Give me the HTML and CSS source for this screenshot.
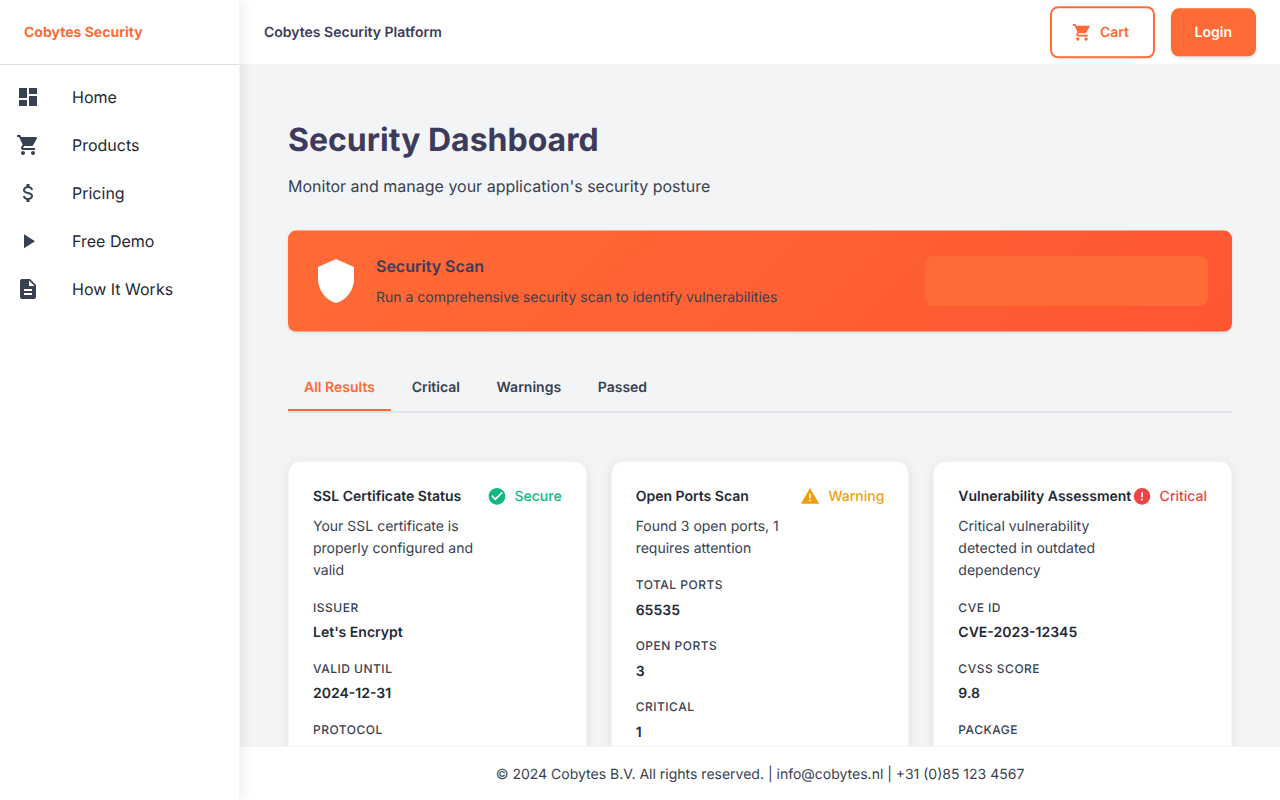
FILE: index.html
```html
<!DOCTYPE html>
<html lang="en">
<head>
<meta charset="utf-8">
<title>Cobytes Security Platform</title>
<link rel="stylesheet" href="styles.css">
</head>
<body>
<svg class="sprite" aria-hidden="true">
  <symbol id="cart" viewBox="0 0 24 24"><path d="M17 18a2 2 0 0 1 2 2 2 2 0 0 1-2 2 2 2 0 0 1-2-2c0-1.11.89-2 2-2M1 2h3.27l.94 2H20a1 1 0 0 1 1 1c0 .17-.05.34-.12.5l-3.58 6.47c-.34.61-1 1.03-1.75 1.03H8.1l-.9 1.63-.03.12a.25.25 0 0 0 .25.25H19v2H7a2 2 0 0 1-2-2c0-.35.09-.68.24-.96l1.36-2.45L3 4H1V2m6 16a2 2 0 0 1 2 2 2 2 0 0 1-2 2 2 2 0 0 1-2-2c0-1.11.89-2 2-2z"/></symbol>
</svg>
<div class="app">
  <aside class="sidebar">
    <div class="brand">Cobytes Security</div>
    <nav class="nav">
      <a class="nav-item"><svg class="icon" viewBox="0 0 24 24"><path d="M13 3v6h8V3m-8 18h8V11h-8M3 21h8v-6H3m0-2h8V3H3v10z"/></svg>Home</a>
      <a class="nav-item"><svg class="icon"><use href="#cart"/></svg>Products</a>
      <a class="nav-item"><svg class="icon" viewBox="0 0 24 24"><path d="M7 15h2c0 1.08 1.37 2 3 2s3-.92 3-2c0-1.1-1.04-1.5-3.24-2.03C9.64 12.44 7 11.78 7 9c0-1.79 1.47-3.31 3.5-3.82V3h3v2.18C15.53 5.69 17 7.21 17 9h-2c0-1.08-1.37-2-3-2s-3 .92-3 2c0 1.1 1.04 1.5 3.24 2.03C14.36 11.56 17 12.22 17 15c0 1.79-1.47 3.31-3.5 3.82V21h-3v-2.18C8.47 18.31 7 16.79 7 15z"/></svg>Pricing</a>
      <a class="nav-item"><svg class="icon" viewBox="0 0 24 24"><path d="M8 5.14v14l11-7-11-7z"/></svg>Free Demo</a>
      <a class="nav-item"><svg class="icon" viewBox="0 0 24 24"><path fill-rule="evenodd" d="M14 2H6a2 2 0 0 0-2 2v16a2 2 0 0 0 2 2h12a2 2 0 0 0 2-2V8zM13 9V3.500L18.500 9zM8 12h8v2H8zM8 16h8v2H8z"/></svg>How It Works</a>
    </nav>
  </aside>
  <div class="page">
    <header class="topbar">
      <div class="topbar-title">Cobytes Security Platform</div>
      <div class="actions">
        <button class="btn btn-outline"><svg class="btn-icon"><use href="#cart"/></svg><span class="btn-label">Cart</span></button>
        <button class="btn btn-solid"><span class="btn-label">Login</span></button>
      </div>
    </header>
    <main class="content">
      <h1 class="title">Security Dashboard</h1>
      <p class="subtitle">Monitor and manage your application's security posture</p>
      <section class="banner">
        <svg class="shield" viewBox="0 0 24 24"><path d="M12 1 3 5v6c0 5.550 3.840 10.740 9 12 5.160-1.260 9-6.450 9-12V5l-9-4z"/></svg>
        <div class="banner-text">
          <h2 class="banner-title">Security Scan</h2>
          <p class="banner-desc">Run a comprehensive security scan to identify vulnerabilities</p>
        </div>
        <div class="banner-action"></div>
      </section>
      <div class="tabs">
        <div class="tab active">All Results</div>
        <div class="tab">Critical</div>
        <div class="tab">Warnings</div>
        <div class="tab">Passed</div>
      </div>
      <div class="cards">
        <article class="card">
          <div class="card-head">
            <div class="card-info"><h3 class="card-title">SSL Certificate Status</h3><p class="card-desc">Your SSL certificate is properly configured and valid</p></div>
            <div class="status secure"><svg class="status-icon" viewBox="0 0 24 24"><path d="M12 2C6.500 2 2 6.500 2 12s4.500 10 10 10 10-4.500 10-10S17.500 2 12 2m-2 15-5-5 1.410-1.410L10 14.170l7.590-7.590L19 8l-9 9z"/></svg>Secure</div>
          </div>
          <dl class="facts"><dt>Issuer</dt><dd>Let's Encrypt</dd><dt>Valid Until</dt><dd>2024-12-31</dd><dt>Protocol</dt></dl>
        </article>
        <article class="card">
          <div class="card-head">
            <div class="card-info"><h3 class="card-title">Open Ports Scan</h3><p class="card-desc">Found 3 open ports, 1 requires attention</p></div>
            <div class="status warning"><svg class="status-icon" viewBox="0 0 24 24"><path d="M13 14h-2V9h2m0 9h-2v-2h2M1 21h22L12 2 1 21z"/></svg>Warning</div>
          </div>
          <dl class="facts"><dt>Total Ports</dt><dd>65535</dd><dt>Open Ports</dt><dd>3</dd><dt>Critical</dt><dd>1</dd></dl>
        </article>
        <article class="card">
          <div class="card-head">
            <div class="card-info"><h3 class="card-title">Vulnerability Assessment</h3><p class="card-desc">Critical vulnerability detected in outdated dependency</p></div>
            <div class="status critical"><svg class="status-icon" viewBox="0 0 24 24"><path d="M13 13h-2V7h2m0 10h-2v-2h2M12 2A10 10 0 0 0 2 12a10 10 0 0 0 10 10 10 10 0 0 0 10-10A10 10 0 0 0 12 2z"/></svg>Critical</div>
          </div>
          <dl class="facts"><dt>CVE ID</dt><dd>CVE-2023-12345</dd><dt>CVSS Score</dt><dd>9.8</dd><dt>Package</dt></dl>
        </article>
      </div>
    </main>
    <footer class="footer">© 2024 Cobytes B.V. All rights reserved. | info@cobytes.nl | +31 (0)85 123 4567</footer>
  </div>
</div>
</body>
</html>
```

FILE: styles.css
```css
* { box-sizing: border-box; }
body {
  margin: 0;
  font-family: Inter, "Liberation Sans", sans-serif;
  font-size: 14px;
  line-height: 22.4px;
  color: #374151;
  background: #f3f4f6;
  text-rendering: geometricPrecision;
}
h1, h2, h3, p, dl, dd { margin: 0; }
svg { fill: currentColor; flex: none; }
.sprite { display: none; }
.app { display: flex; height: 800px; overflow: hidden; }

.sidebar {
  width: 240px;
  flex: none;
  background: #fff;
  border-right: 1px solid #f3f4f6;
  box-shadow: 2px 0 12px rgba(0, 0, 0, 0.08);
  z-index: 2;
}
.brand {
  height: 65px;
  padding: 22px 24px 0;
  border-bottom: 1px solid #e0e0e0;
  font-weight: 700;
  color: #ff6b35;
}
.nav { padding-top: 8px; }
.nav-item {
  display: flex;
  align-items: center;
  gap: 32px;
  height: 48px;
  padding-left: 16px;
  font-size: 16px;
  color: #1f2937;
}
.icon { width: 24px; height: 24px; color: #374151; }

.page { flex: 1; min-width: 0; display: flex; flex-direction: column; }
.topbar {
  display: flex;
  justify-content: space-between;
  align-items: center;
  height: 64.4px;
  flex: none;
  padding: 0 24px;
  background: #fff;
}
.topbar-title { padding-top: 1.6px; font-weight: 600; color: #3d3a5c; }
.actions { display: flex; align-items: center; gap: 16px; }
.btn {
  display: flex;
  align-items: center;
  height: 48px;
  padding: 0 24px;
  border: 0;
  border-radius: 8px;
  font: 600 14px/22.4px Inter, sans-serif;
  text-rendering: inherit;
  transform: translateY(0.3px);
}
.btn-label { padding-top: 2px; }
.btn-outline {
  height: 52px;
  padding: 0 23.5px 0 20px;
  border: 2px solid #ff6b35;
  background: #fff;
  color: #ff6b35;
}
.btn-icon { width: 20px; height: 20px; margin-right: 8px; }
.btn-solid {
  background: #ff6b35;
  color: #fff;
  box-shadow: 0 1px 3px rgba(0, 0, 0, 0.12);
}

.content { flex: 1; min-height: 0; overflow: hidden; padding: 48px 48px 0; }
.title {
  margin-top: 8px;
  font-size: 32px;
  line-height: 40px;
  font-weight: 700;
  color: #3d3a5c;
}
.subtitle { margin-top: 14px; font-size: 16px; line-height: 25.6px; }
.banner {
  display: flex;
  align-items: center;
  height: 101px;
  margin-top: 31px;
  padding: 0 24px;
  border-radius: 8px;
  background: linear-gradient(135deg, #ff6b35, #ff5533);
  box-shadow: 0 1px 3px rgba(0, 0, 0, 0.1);
  transform: translateY(-0.4px);
}
.shield { width: 48px; height: 48px; color: #fff; transform: translateY(0.4px); }
.banner-text { flex: 1; padding: 1px 0 0 16px; }
.banner-title { font-size: 16px; line-height: 25.6px; font-weight: 600; color: #3d3a5c; }
.banner-desc { margin-top: 7px; }
.banner-action {
  width: 283px;
  height: 50px;
  border-radius: 8px;
  background: #ff6b35;
  transform: translateY(0.4px);
}

.tabs {
  display: flex;
  gap: 4.7px;
  margin-top: 32px;
  height: 49px;
  border-bottom: 2px solid #e0e2e5;
}
.tab { padding: 13.2px 16px 0; height: 48px; font-weight: 600; }
.tab.active { height: 47.4px; color: #ff6b35; border-bottom: 2px solid #ff6b35; }

.cards {
  display: grid;
  grid-template-columns: repeat(3, 1fr);
  gap: 24px;
  margin-top: 48px;
}
.card {
  min-width: 0;
  padding: 24px 24px 24px;
  background: #fff;
  border: 1px solid #f3f4f6;
  border-radius: 12px;
  box-shadow: 0 2px 12px rgba(0, 0, 0, 0.08);
}
.card-head { display: flex; align-items: flex-start; }
.card-info { flex: 1; min-width: 0; }
.card-title { font-size: 14px; font-weight: 600; color: #1f2937; white-space: nowrap; }
.card-desc { margin-top: 7.9px; line-height: 22px; }
.status { display: flex; align-items: center; height: 22.4px; gap: 8px; font-weight: 500; }
.status-icon { width: 20px; height: 20px; transform: translateY(-0.7px); }
.secure { color: #10b981; }
.warning { color: #f59e0b; }
.critical { color: #ef4444; }
.facts { margin-top: 15.55px; }
.card:nth-child(2) .facts { margin-top: 15.2px; }
.facts dt {
  font-size: 12px;
  font-weight: 500;
  line-height: 19px;
  letter-spacing: 0.5px;
  text-transform: uppercase;
}
.facts dd { margin: 5px 0 15px; line-height: 22px; font-weight: 600; color: #1f2937; }
.card:nth-child(2) dd { margin: 6px 0 14px; }

.footer {
  height: 54.4px;
  flex: none;
  padding-top: 17px;
  border-top: 1px solid #f3f4f6;
  background: #fff;
  text-align: center;
}
```
